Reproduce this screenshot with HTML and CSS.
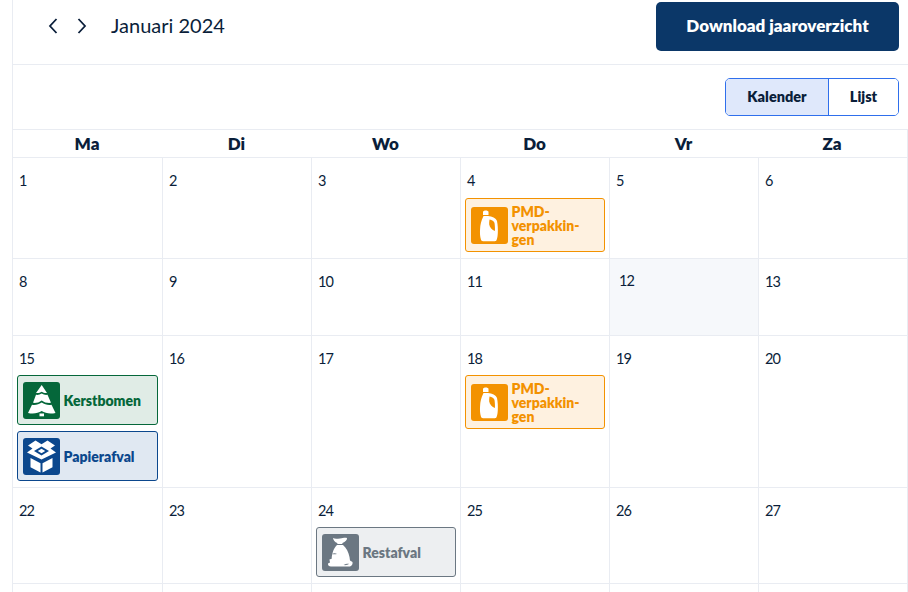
FILE: index.html
```html
<!DOCTYPE html>
<html lang="nl">
<head>
<meta charset="utf-8">
<title>Kalender</title>
<link rel="stylesheet" href="styles.css">
</head>
<body>
<svg class="defs" width="0" height="0" aria-hidden="true">
  <symbol id="i-bottle" viewBox="0 0 37 37">
    <path fill="#fff" d="M12 5c0-2 5.500-2 5.500 0v3h-5.500z"/>
    <path fill="#fff" d="M12.500 9h4.500c4 .5 8 2 9 5 .8 4 1 8 .8 12-.1 3-.5 5-1.200 7-.3.8-.9 1.200-1.800 1.200H12c-1 0-1.600-.4-2-1.400-1-3-1.200-7-.9-11 .2-3.800 1-8 3.400-12.800z"/>
    <path fill="#f39200" d="M18.500 12.500c2.500.5 4.500 1.500 5 3.500.4 2.500.5 5 .4 8-2.700-1.200-5.400-3.500-5.700-6.500-.1-1.800 0-3.500.3-5z"/>
  </symbol>
  <symbol id="i-tree" viewBox="0 0 37 37">
    <path fill="#fff" d="M18.700 3l5.300 8c-1.800.3-3.800-.2-5.300-1.300-1.500 1.100-3.500 1.600-5.700 1.300z"/>
    <path fill="#fff" d="M18.700 11.500c1.700 1.100 3.700 1.600 5.800 1.300l3.500 8c-3.300.5-6.700-.4-9.300-2.400-2.600 2-6 2.900-8.700 2.400l3-8c2.100.3 4-.2 5.700-1.300z"/>
    <path fill="#fff" d="M18.700 20.500c2.900 2 6.300 2.900 9.800 2.300l4 8.200c-5 1.200-10.300.5-13.800-1.900-3.500 2.400-9 3.100-13.700 1.900l4-8.200c3.500.6 6.800-.3 9.700-2.300z"/>
    <rect fill="#fff" x="16.500" y="31.500" width="4.500" height="2.800"/>
  </symbol>
  <symbol id="i-box" viewBox="0 0 37 37">
    <path fill="#fff" d="M18.500 21.500L4 14.500l5.500-4L5 7.500 12.500 2.500l6 3.800 6-3.800 7.500 5-4.500 3 5.500 4z"/>
    <path fill="#0b478d" d="M18.500 8.500l7.500 4.500-7.500 4.500L11 13z"/>
    <path fill="#fff" d="M18.500 10.800l3.700 2.200-3.700 2.200-3.700-2.200z"/>
    <path fill="#fff" d="M7.500 20l10 5.200V34.500l-10-5.200zM29.500 20l-10 5.200V34.500l10-5.200z"/>
  </symbol>
  <symbol id="i-bag" viewBox="0 0 37 37">
    <path fill="#fff" d="M11 4c2 1.200 4 .8 7 .4s5-.9 7-.4c.3 2-1.700 3.800-4.500 5l-.3 1H15.500l-.3-1C13 8.200 11.200 6 11 4z"/>
    <path fill="#fff" d="M15 11h6c3.500 3 5.500 7 6.500 12l.5 3.500 2.500 1.500c.4 2-.5 4-2.500 4.500H9c-2 0-3.200-1-3-3l2-1-.6-3 2.300-.8c.2-5 2-10.800 5.300-13.700z"/>
    <path fill="#6b7782" d="M10 20c1.500-1 3.500-1 5 0-1.500.3-3.500.6-5 0zM21.500 31c2-1 3.500-1.500 5.500-1.300-1.500 1.300-3.500 1.700-5.500 1.300z"/>
  </symbol>
</svg>
<main class="calendar">
  <header class="topbar">
    <div class="nav">
      <button class="chev" type="button" aria-label="Vorige">
        <svg width="12" height="16" viewBox="0 0 12 16"><path d="M9.500 1 L3 8 L9.500 15" fill="none" stroke="#0a1e3a" stroke-width="1.800"/></svg>
      </button>
      <button class="chev" type="button" aria-label="Volgende">
        <svg width="12" height="16" viewBox="0 0 12 16"><path d="M2.500 1 L9 8 L2.500 15" fill="none" stroke="#0a1e3a" stroke-width="1.800"/></svg>
      </button>
      <h1 class="month">Januari 2024</h1>
    </div>
    <button class="download" type="button">Download jaaroverzicht</button>
  </header>
  <div class="toolbar">
    <div class="switch">
      <button class="switch-btn active" type="button">Kalender</button>
      <button class="switch-btn" type="button">Lijst</button>
    </div>
  </div>
  <div class="grid">
    <div class="head">Ma</div><div class="head">Di</div><div class="head">Wo</div><div class="head">Do</div><div class="head">Vr</div><div class="head">Za</div>

    <div class="cell"><span class="num">1</span></div>
    <div class="cell"><span class="num">2</span></div>
    <div class="cell"><span class="num">3</span></div>
    <div class="cell"><span class="num">4</span>
      <div class="event pmd"><span class="icon"><svg width="37" height="37"><use href="#i-bottle"/></svg></span><span class="label">PMD-<br>verpakkin-<br>gen</span></div>
    </div>
    <div class="cell"><span class="num">5</span></div>
    <div class="cell"><span class="num">6</span></div>

    <div class="cell row-min"><span class="num">8</span></div>
    <div class="cell row-min"><span class="num">9</span></div>
    <div class="cell row-min"><span class="num">10</span></div>
    <div class="cell row-min"><span class="num">11</span></div>
    <div class="cell row-min today"><span class="num">12</span></div>
    <div class="cell row-min"><span class="num">13</span></div>

    <div class="cell"><span class="num">15</span>
      <div class="event tree"><span class="icon"><svg width="37" height="37"><use href="#i-tree"/></svg></span><span class="label">Kerstbomen</span></div>
      <div class="event paper"><span class="icon"><svg width="37" height="37"><use href="#i-box"/></svg></span><span class="label">Papierafval</span></div>
    </div>
    <div class="cell"><span class="num">16</span></div>
    <div class="cell"><span class="num">17</span></div>
    <div class="cell"><span class="num">18</span>
      <div class="event pmd"><span class="icon"><svg width="37" height="37"><use href="#i-bottle"/></svg></span><span class="label">PMD-<br>verpakkin-<br>gen</span></div>
    </div>
    <div class="cell"><span class="num">19</span></div>
    <div class="cell"><span class="num">20</span></div>

    <div class="cell"><span class="num">22</span></div>
    <div class="cell"><span class="num">23</span></div>
    <div class="cell"><span class="num">24</span>
      <div class="event rest"><span class="icon"><svg width="37" height="37"><use href="#i-bag"/></svg></span><span class="label">Restafval</span></div>
    </div>
    <div class="cell"><span class="num">25</span></div>
    <div class="cell"><span class="num">26</span></div>
    <div class="cell"><span class="num">27</span></div>

    <div class="cell tail"></div><div class="cell tail"></div><div class="cell tail"></div><div class="cell tail"></div><div class="cell tail"></div><div class="cell tail"></div>
  </div>
</main>
</body>
</html>
```
FILE: styles.css
```css
html, body { margin: 0; padding: 0; }
html { height: 592px; overflow: hidden; background: #fff; }
body {
  width: 908px;
  height: 592px;
  overflow: hidden;
  font-family: Lato, sans-serif;
  color: #0a1e3a;
}
.defs { position: absolute; }
.calendar {
  margin-left: 12px;
  border-left: 1px solid #e9ecf2;
}
button { font-family: inherit; cursor: pointer; }
.topbar {
  display: flex;
  justify-content: space-between;
  align-items: flex-start;
  padding: 2px 9px 0 0;
  border-bottom: 1px solid #e9ecf2;
  box-sizing: border-box;
  height: 65px;
}
.nav {
  display: flex;
  align-items: center;
  height: 47px;
  padding-left: 34px;
}
.chev {
  display: flex;
  width: 12px;
  height: 16px;
  padding: 0;
  border: 0;
  background: none;
  margin-right: 17px;
}
.month {
  margin: 0 0 2px 6px;
  font-size: 20px;
  font-weight: 400;
  line-height: 24px;
}
.download {
  width: 243px;
  height: 49px;
  padding: 0 0 2px;
  border: 0;
  border-radius: 5px;
  background: #0b3768;
  color: #fff;
  font-size: 17px;
  font-weight: 800;
}
.toolbar {
  display: flex;
  justify-content: flex-end;
  height: 64px;
  padding: 13px 9px 0 0;
  box-sizing: border-box;
}
.switch {
  display: flex;
  height: 38px;
  border: 1px solid #2f6fec;
  border-radius: 5px;
  overflow: hidden;
  box-sizing: border-box;
}
.switch-btn {
  border: 0;
  background: #fff;
  color: #0a1e3a;
  font-size: 14.500px;
  font-weight: 800;
  padding: 0 0 2px;
  width: 69px;
}
.switch-btn.active {
  width: 103px;
  background: #dfe8fb;
  border-right: 1px solid #2f6fec;
}
.grid {
  display: grid;
  grid-template-columns: 150px repeat(5, 149px);
  border-top: 1px solid #e9ecf2;
}
.head {
  height: 27px;
  line-height: 27px;
  padding-right: 2px;
  text-align: center;
  font-size: 17px;
  font-weight: 800;
  color: #0a1e3a;
  border-bottom: 1px solid #e9ecf2;
}
.head:nth-child(6) { border-right: 1px solid #e9ecf2; }
.cell {
  box-sizing: border-box;
  border-right: 1px solid #e9ecf2;
  border-bottom: 1px solid #e9ecf2;
  padding: 0 4px 6px 4px;
}
.row-min { min-height: 77px; }
.tail { height: 8px; padding: 0; border-bottom: 0; }
.num {
  display: block;
  height: 39px;
  padding: 13px 0 0 2px;
  box-sizing: border-box;
  font-size: 14.500px;
  letter-spacing: -.8px;
  line-height: 20px;
  color: #0a1e3a;
}
.cell:nth-child(-n+12) .num { height: 40px; }
.today { background: #f6f8fb; }
.today .num { padding: 12px 0 0 5px; }
.event {
  display: flex;
  align-items: center;
  min-height: 50px;
  box-sizing: border-box;
  border: 1px solid;
  border-radius: 3px;
  padding: 5px;
  margin-bottom: 6px;
  font-size: 14px;
  font-weight: 800;
  line-height: 14px;
}
.event:last-child { margin-bottom: 0; }
.icon {
  flex: none;
  display: block;
  width: 37px;
  height: 37px;
  border-radius: 3px;
  margin-right: 3.500px;
}
.icon svg { display: block; }
.label { margin: 1px 0 -1px; }
.pmd { color: #f39200; border-color: #f39200; background: #fef1e0; }
.pmd .icon { background: #f39200; }
.tree { color: #05673a; border-color: #05673a; background: #e0ece6; }
.tree .icon { background: #05673a; }
.paper { color: #0b478d; border-color: #0b478d; background: #e0e8f2; }
.paper .icon { background: #0b478d; }
.rest { color: #6b7782; border-color: #6b7782; background: #edeff1; }
.rest .icon { background: #6b7782; }
```
